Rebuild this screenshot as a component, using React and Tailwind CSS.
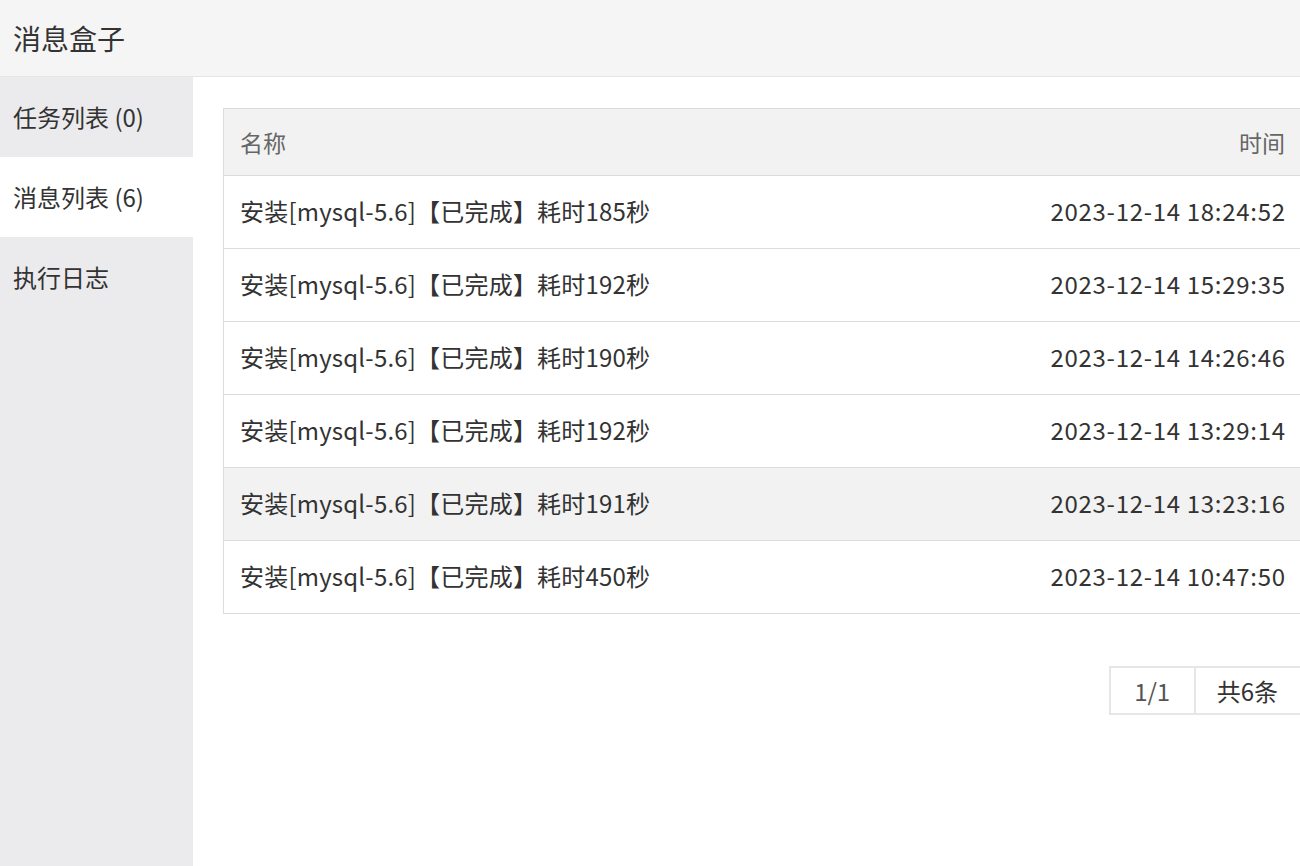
const ROWS = [
  ['安装[mysql-5.6]【已完成】耗时185秒', '2023-12-14 18:24:52'],
  ['安装[mysql-5.6]【已完成】耗时192秒', '2023-12-14 15:29:35'],
  ['安装[mysql-5.6]【已完成】耗时190秒', '2023-12-14 14:26:46'],
  ['安装[mysql-5.6]【已完成】耗时192秒', '2023-12-14 13:29:14'],
  ['安装[mysql-5.6]【已完成】耗时191秒', '2023-12-14 13:23:16'],
  ['安装[mysql-5.6]【已完成】耗时450秒', '2023-12-14 10:47:50'],
]

const MENU = ['任务列表 (0)', '消息列表 (6)', '执行日志']

export default function App() {
  return (
    <div className="h-[866px] w-[1300px] overflow-hidden bg-white text-[#333] flex flex-col"
      style={{fontFamily:'"Noto Sans CJK SC", "Noto Sans", sans-serif'}}>
      <div className="h-[77px] shrink-0 bg-[#f5f5f5] border-b border-[#e6e6e6] flex items-center px-[13px] text-[28px]">
        消息盒子
      </div>
      <div className="flex flex-1 min-h-0">
        <div className="w-[193px] shrink-0 bg-[#ebebed] flex flex-col">
          {MENU.map((m,i)=>(
            <div key={m} className={`h-[80px] flex items-center px-[13px] text-[24px] ${i===1?'bg-white':''}`}>{m}</div>
          ))}
        </div>
        <div className="flex-1 min-w-0 pl-[30px] pt-[31px]">
          <div className="w-[1079px]">
            <div className="border border-[#dcdcdc]">
              <div className="h-[66px] bg-[#f2f2f2] flex items-center justify-between px-[16px] text-[23px] text-[#666]">
                <span>名称</span><span>时间</span>
              </div>
              {ROWS.map(([n,t],i)=>(
                <div key={i} className={`h-[73px] border-t border-[#dcdcdc] flex items-center justify-between px-[16px] pb-[2px] text-[24px] ${i===4?'bg-[#f2f2f2]':''}`}>
                  <span className="tracking-[0.2px]">{n}</span><span className="tracking-[0.7px] -mr-[0.7px]">{t}</span>
                </div>
              ))}
            </div>
            <div className="flex justify-end mt-[52px]">
              <div className="flex border-2 border-[#e6e6e6] h-[49px] text-[24px]">
                <div className="w-[85px] flex items-center justify-center text-[#555] border-r-2 border-[#e6e6e6]">1/1</div>
                <div className="pl-[21px] pr-[22px] flex items-center">共6条</div>
              </div>
            </div>
          </div>
        </div>
      </div>
    </div>
  )
}
